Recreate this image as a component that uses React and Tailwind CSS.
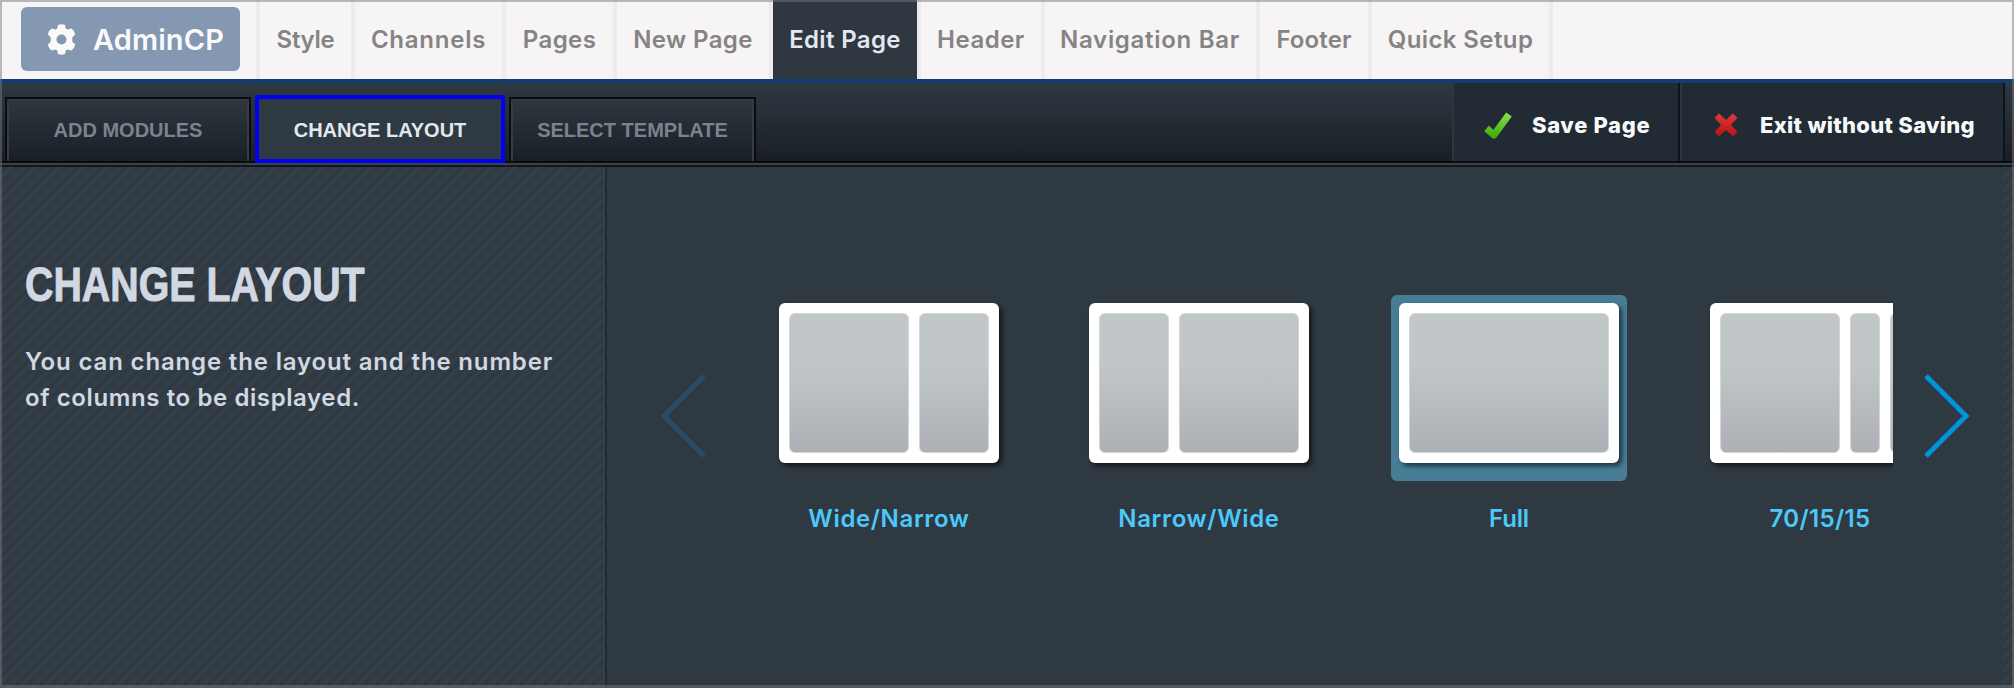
const nav = [
  { label: "Style", box: "w-[95px]", text: "tracking-[-0.3px]" },
  { label: "Channels", box: "w-[151px]", text: "tracking-[0.75px]" },
  { label: "Pages", box: "w-[111px]", text: "tracking-[0.4px]" },
  { label: "New Page", box: "w-[156px]", text: "tracking-[0.4px]" },
  { label: "Edit Page", box: "w-[148px]", text: "tracking-[0.35px]", active: true },
  { label: "Header", box: "w-[124px]", text: "tracking-[0.5px]" },
  { label: "Navigation Bar", box: "w-[215px]", text: "tracking-[0.7px] -ml-[1px]" },
  { label: "Footer", box: "w-[112px]", text: "tracking-[0.1px]" },
  { label: "Quick Setup", box: "w-[181px]", text: "tracking-[0.4px]" },
];

function NavItem({ label, box, text, active }) {
  return (
    <div
      className={`${box} shrink-0 border-r-4 border-[#edebec] pt-[1px] flex items-center justify-center text-[24px] font-semibold whitespace-nowrap ${
        active ? "bg-[#2f3740] text-[#e2e8f0]" : "text-[#858384]"
      }`}
    >
      <span className={text}>{label}</span>
    </div>
  );
}

function Tab({ children, className }) {
  return (
    <div className={`${className} h-16 mt-[14px] border-2 border-b-0 border-[#090d10] flex`}>
      <div className="flex-1 border-2 border-b-0 border-[#363c43] bg-linear-to-b from-[#2d363f] to-[#191f25] flex items-center justify-center text-[20px] font-bold text-[#7b838e] pb-[2px]">
        {children}
      </div>
    </div>
  );
}

function Pane({ className }) {
  return (
    <div
      className={`${className} shrink-0 rounded-[6px] border border-[#d3d5d6] bg-linear-to-b from-[#c1c6c9] from-35% to-[#adb1b5]`}
    />
  );
}

function Layout({ panes, label, active, labelClass }) {
  return (
    <div className="w-[236px] shrink-0 flex flex-col items-center">
      <div className={`w-[236px] h-[186px] rounded-[6px] pt-2 px-2 ${active ? "bg-[#477e96]" : ""}`}>
        <div className="w-[220px] h-[160px] rounded-[6px] bg-white p-[10px] flex gap-[10px] overflow-hidden shadow-[3px_3px_5px_rgba(0,0,0,0.6)]">
          {panes.map((p, i) => (
            <Pane key={i} className={p} />
          ))}
        </div>
      </div>
      <div className={`mt-5 h-9 leading-9 text-[24px] font-semibold text-[#4dc8fb] whitespace-nowrap ${labelClass}`}>
        {label}
      </div>
    </div>
  );
}

function Stripes({ id, className }) {
  return (
    <svg className={className} aria-hidden="true">
      <defs>
        <pattern id={id} width="12" height="12" patternUnits="userSpaceOnUse">
          <path d="M-3 3L3 -3M-3 15L15 -3M9 15L15 9" stroke="#343e47" strokeWidth="4" />
        </pattern>
      </defs>
      <rect width="100%" height="100%" fill={`url(#${id})`} />
    </svg>
  );
}

export default function App() {
  return (
    <div className="relative w-[2014px] h-[688px] overflow-hidden bg-[#2f3941] font-['Inter',sans-serif] flex flex-col">
      <header className="h-[83px] shrink-0 bg-[#f6f4f5] border-b-4 border-[#133c70] flex">
        <div className="w-[260px] shrink-0 border-r-4 border-[#edebec] pl-[21px] pt-[7px]">
          <div className="w-[219px] h-16 rounded-[6px] bg-[#8598b1] flex items-center pl-[26px] text-[#fbfafb]">
            <svg width="29" height="31" viewBox="0 0 29 31" aria-hidden="true">
              <path
                fill="currentColor"
                fillRule="evenodd"
                d="M11 1Q14.500 -0.500 18 1L18.700 4.500L20.500 5.500L24.400 4.500Q27.600 6.500 28.200 10.500L25.300 13.200V17.800L28.200 20.500Q27.500 24.500 24.400 26.500L20.500 25.500L18.700 26.500L18 30Q14.500 31.500 11 30L10.300 26.500L8.500 25.500L4.600 26.500Q1.500 24.500 0.800 20.500L3.700 17.800V13.200L0.800 10.500Q1.400 6.500 4.600 4.500L8.500 5.500L10.300 4.500ZM14.500 10.500A5 5 0 1 0 14.500 20.500A5 5 0 1 0 14.500 10.500Z"
              />
            </svg>
            <span className="ml-[17px] text-[29px] font-semibold leading-none tracking-[0.1px]">AdminCP</span>
          </div>
        </div>
        {nav.map((n) => (
          <NavItem key={n.label} {...n} />
        ))}
      </header>

      <div className="h-[84px] shrink-0 bg-linear-to-b from-[#2f3943] to-[#181d23] border-b-2 border-[#11171a] flex flex-col">
        <div className="h-[80px] shrink-0 border-b-2 border-[#090d10] flex font-['Liberation_Sans',sans-serif]">
          <Tab className="ml-[5px] w-[246px]">ADD MODULES</Tab>
          <div className="relative z-10 ml-1 mt-3 w-[250px] h-[68px] border-4 border-[#0000f5] bg-[#2f3941] flex items-center justify-center text-[20px] font-bold text-[#e2e8f0] pt-[2px]">
            CHANGE LAYOUT
          </div>
          <Tab className="ml-1 w-[247px]">SELECT TEMPLATE</Tab>
          <div className="ml-auto mr-[9px] flex font-['Inter',sans-serif] text-[22px] font-extrabold text-[#f8fafc] whitespace-nowrap">
            <div className="w-[228px] border-l-2 border-l-[#2d3740] border-r-2 border-r-[#0d1317] bg-[#222b33] flex items-center pl-[27px] pt-[6px]">
              <svg width="34" height="34" viewBox="0 0 34 34" fill="none" aria-hidden="true">
                <defs>
                  <linearGradient id="ok" x1="0" y1="0" x2="0" y2="1">
                    <stop offset="0" stopColor="#86de4c" />
                    <stop offset="1" stopColor="#45ad0e" />
                  </linearGradient>
                </defs>
                <path d="M5.500 20.500L13 27L28 6.500" stroke="url(#ok)" strokeWidth="7" strokeLinejoin="round" />
              </svg>
              <span className="ml-[17px] tracking-[0.65px]">Save Page</span>
            </div>
            <div className="w-[325px] border-l-2 border-l-[#2d3740] border-r-2 border-r-[#0d1317] bg-[#222b33] flex items-center pl-[31px] pt-[6px]">
              <svg width="26" height="28" viewBox="0 0 26 28" aria-hidden="true">
                <defs>
                  <linearGradient id="no" x1="0" y1="0" x2="0" y2="1">
                    <stop offset="0" stopColor="#e23a3a" />
                    <stop offset="1" stopColor="#b81111" />
                  </linearGradient>
                </defs>
                <path d="M6 2.500L13 9L20 2.500L24.500 7L18 14L24.500 21L20 25.500L13 19L6 25.500L1.500 21L8 14L1.500 7Z" fill="url(#no)" />
              </svg>
              <span className="ml-[21px] tracking-[0.3px]">Exit without Saving</span>
            </div>
          </div>
        </div>
        <div className="h-[2px] bg-[#3b4146]" />
      </div>

      <main className="flex-1 flex min-h-0">
        <section className="relative w-[607px] shrink-0 border-r-2 border-[#222b33] pl-[25px] pt-[89px]">
          <Stripes id="stripe-left" className="absolute inset-0 w-full h-full border-r-2 border-[#364049]" />
          <h1 className="relative origin-left scale-x-[0.803] text-[49px] leading-[56px] font-bold text-[#d1d8e2] [-webkit-text-stroke:1px_#d1d8e2] font-['Liberation_Sans',sans-serif] whitespace-nowrap">
            CHANGE LAYOUT
          </h1>
          <p className="relative mt-[32px] text-[24px] leading-9 font-semibold text-[#d1d8e2] whitespace-nowrap">
            <span className="tracking-[0.84px]">You can change the layout and the number</span>
            <br />
            <span className="tracking-[0.6px]">of columns to be displayed.</span>
          </p>
        </section>

        <section className="flex-1 flex min-w-0 pl-[52px]">
          <svg className="mt-[204px] shrink-0" width="50" height="90" viewBox="0 0 50 90" fill="none" aria-hidden="true">
            <path d="M45 5L5 45L45 85" stroke="#234f6b" strokeWidth="5" />
          </svg>
          <div className="ml-[62px] mt-[128px] w-[1122px] h-[280px] shrink-0 overflow-hidden flex">
            <Layout panes={["w-[120px]", "w-[70px]"]} label="Wide/Narrow" labelClass="tracking-[0.65px]" />
            <div className="w-[74px] shrink-0" />
            <Layout panes={["w-[70px]", "w-[120px]"]} label="Narrow/Wide" labelClass="tracking-[0.65px]" />
            <div className="w-[74px] shrink-0" />
            <Layout panes={["w-[200px]"]} label="Full" active labelClass="tracking-[-0.2px]" />
            <div className="w-[75px] shrink-0" />
            <Layout panes={["w-[120px]", "w-[30px]", "w-[30px]"]} label="70/15/15" labelClass="tracking-[0.4px]" />
          </div>
          <svg className="ml-[29px] mt-[204px] shrink-0" width="50" height="90" viewBox="0 0 50 90" fill="none" aria-hidden="true">
            <path d="M4 5L44 45L4 85" stroke="#0095d9" strokeWidth="5" />
          </svg>
          <Stripes id="stripe-right" className="ml-auto w-[11px] h-full" />
        </section>
      </main>
      <div className="absolute inset-0 border-2 border-b-[3px] border-[#7b7879]/50 pointer-events-none" />
    </div>
  );
}
